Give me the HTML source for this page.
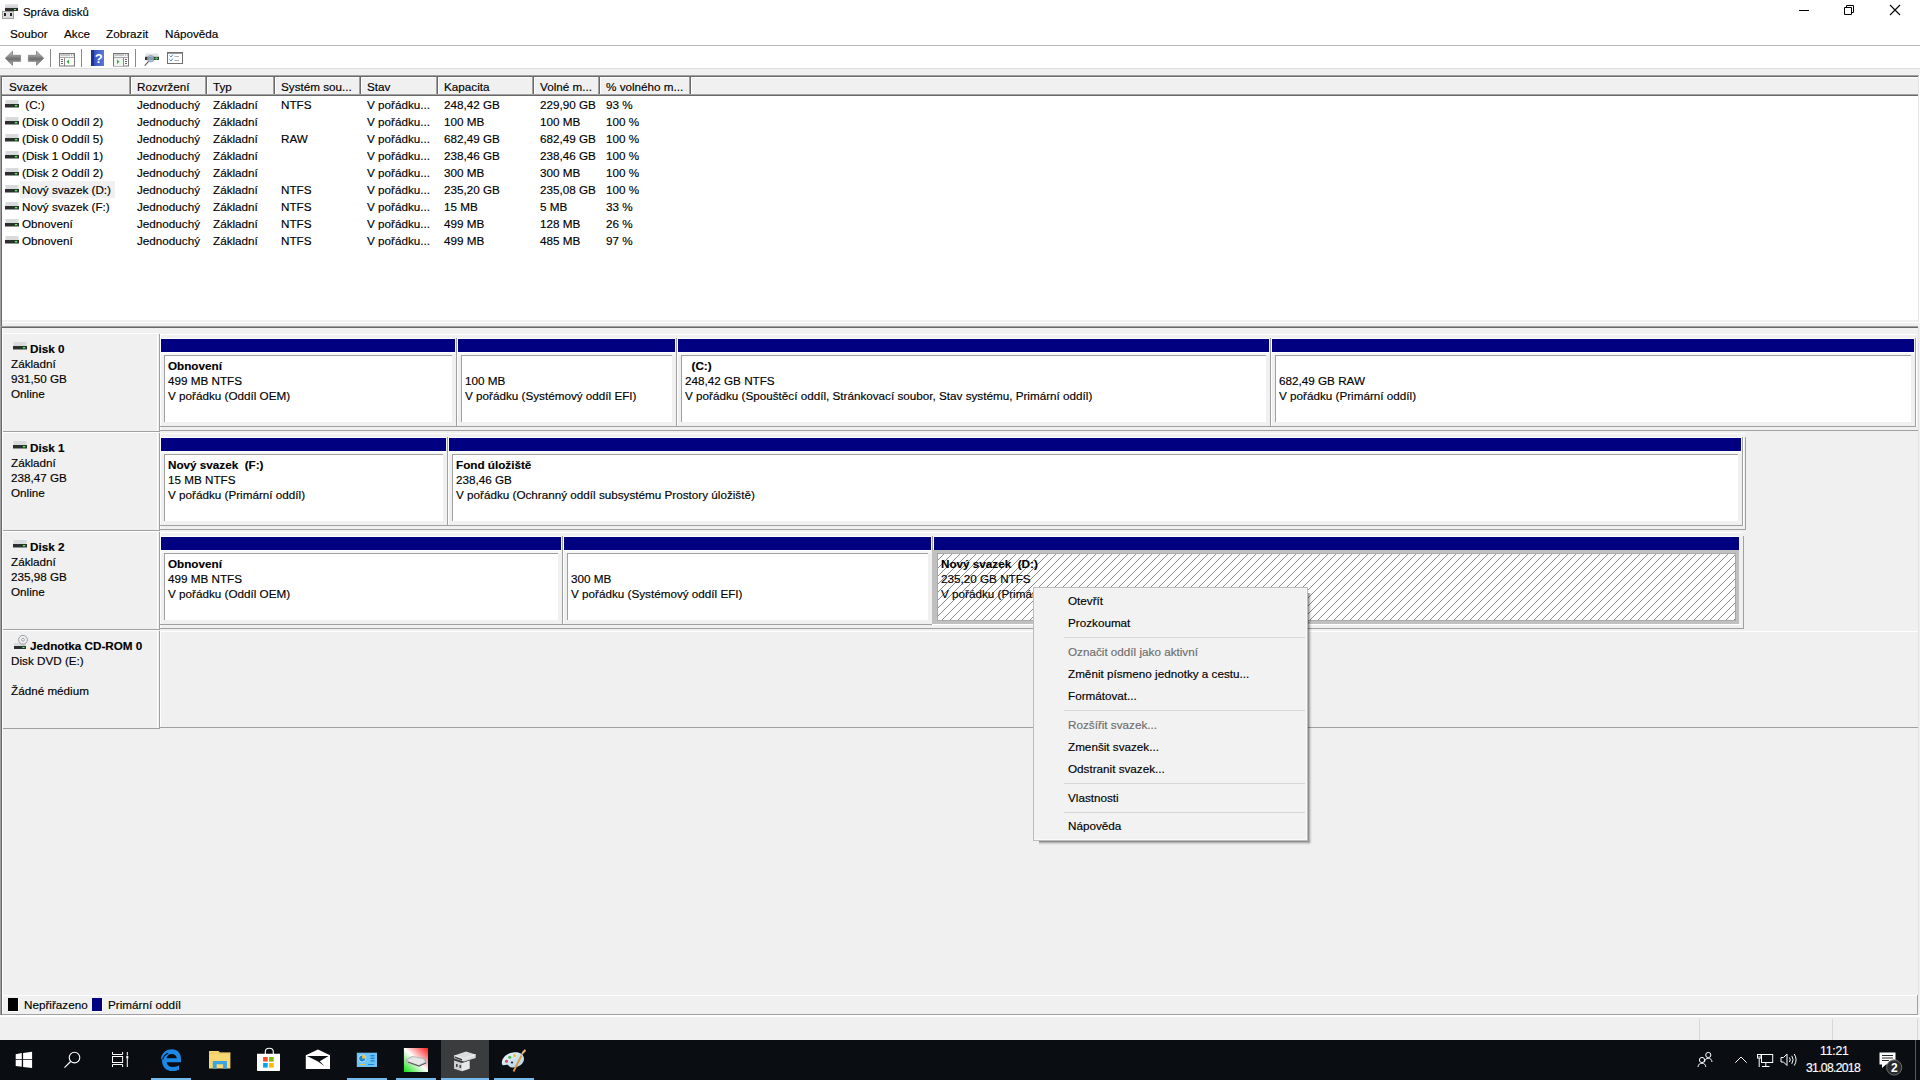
<!DOCTYPE html>
<html><head><meta charset="utf-8"><title>Správa disků</title>
<style>
html,body{margin:0;padding:0}
body{width:1920px;height:1080px;overflow:hidden;position:relative;background:#f0f0f0;font-family:"Liberation Sans",sans-serif;font-size:11.7px;color:#000}
body>div,body>svg{position:absolute}
.t{position:absolute;line-height:15px;white-space:pre;-webkit-text-stroke:0.15px currentColor}
.hatch{position:absolute;background-color:#fff;background-image:repeating-linear-gradient(-45deg,transparent 0,transparent 4.65px,#8c8c8c 4.65px,#8c8c8c 5.65px)}
</style></head><body>
<div style="left:0px;top:0px;width:1920px;height:45px;background:#fff"></div>
<svg style="left:1px;top:3px" width="18" height="17" viewBox="0 0 18 17">
<defs><linearGradient id="dg" x1="0" y1="0" x2="0" y2="1"><stop offset="0" stop-color="#e6e8ea"/><stop offset="1" stop-color="#c4c7ca"/></linearGradient></defs>
<rect x="4" y="1" width="13" height="5" fill="url(#dg)"/>
<rect x="4" y="5" width="13" height="3" fill="#2b2f2c"/>
<rect x="13" y="6" width="2" height="1" fill="#7fe38a"/>
<rect x="1.5" y="8.5" width="11" height="7" fill="#dcdcde" stroke="#a0a0a0" stroke-width="1"/>
<rect x="3" y="10" width="2" height="3" fill="#222"/>
<rect x="9" y="10" width="2" height="3" fill="#222"/>
</svg>
<div class="t" style="left:23px;top:5px;font-size:11.4px">Správa disků</div>
<div style="left:1799px;top:10px;width:10px;height:1px;background:#000"></div>
<svg style="left:1843px;top:4px" width="12" height="12" viewBox="0 0 12 12">
<path d="M1.5 3.5h7v7h-7z M3.5 3.5v-2h7v7h-2" fill="none" stroke="#000" stroke-width="1"/></svg>
<svg style="left:1889px;top:4px" width="12" height="12" viewBox="0 0 12 12">
<path d="M1 1L11 11M11 1L1 11" stroke="#000" stroke-width="1.1"/></svg>
<div class="t" style="left:10px;top:26px;">Soubor</div>
<div class="t" style="left:64px;top:26px;">Akce</div>
<div class="t" style="left:106px;top:26px;">Zobrazit</div>
<div class="t" style="left:165px;top:26px;">Nápověda</div>
<div style="left:0px;top:45px;width:1920px;height:1px;background:#b6b6b6"></div>
<div style="left:0px;top:46px;width:1920px;height:22px;background:#fff"></div>
<div style="left:0px;top:68px;width:1920px;height:1px;background:#dedede"></div>
<div style="left:0px;top:69px;width:1920px;height:6px;background:#f0f0f0"></div>
<svg style="left:4px;top:50px" width="18" height="17" viewBox="0 0 18 17">
<defs><linearGradient id="ag" x1="0" y1="0" x2="0" y2="1"><stop offset="0" stop-color="#d0d0d0"/><stop offset="0.55" stop-color="#6e6e6e"/><stop offset="1" stop-color="#b0b0b0"/></linearGradient></defs>
<path d="M1.3 8.2L8.5 1.2V5.3H16.6V11.3H8.5V15.3Z" fill="url(#ag)" stroke="#8a8a8a" stroke-width="1" stroke-linejoin="round"/></svg>
<svg style="left:27px;top:50px" width="18" height="17" viewBox="0 0 18 17">
<path d="M16.7 8.2L9.5 1.2V5.3H1.4V11.3H9.5V15.3Z" fill="url(#ag)" stroke="#8a8a8a" stroke-width="1" stroke-linejoin="round"/></svg>
<div style="left:50px;top:49px;width:1px;height:18px;background:#8a8a8a"></div>
<div style="left:81px;top:49px;width:1px;height:18px;background:#8a8a8a"></div>
<div style="left:135px;top:49px;width:1px;height:18px;background:#8a8a8a"></div>
<svg style="left:59px;top:53px" width="16" height="14" viewBox="0 0 16 14">
<rect x="0.5" y="0.5" width="15" height="12.5" fill="#fff" stroke="#777"/>
<rect x="1" y="1" width="14" height="3" fill="#eef0f2"/>
<line x1="1.5" y1="2" x2="11" y2="2" stroke="#9a9a9a"/>
<rect x="12" y="1.5" width="1" height="1" fill="#888"/><rect x="14" y="1.5" width="1" height="1" fill="#888"/>
<line x1="1" y1="4.5" x2="15" y2="4.5" stroke="#aaa"/>
<line x1="5.5" y1="5" x2="5.5" y2="13" stroke="#888"/>
<rect x="2" y="6" width="2" height="1" fill="#666"/><rect x="2" y="8" width="2" height="1" fill="#666"/><rect x="2" y="10" width="2" height="1" fill="#666"/>
<path d="M10 6.5L7.5 8.8L10 11Z" fill="#3cb43c"/>
</svg>
<svg style="left:91px;top:50px" width="13" height="16" viewBox="0 0 13 16">
<defs><linearGradient id="hg" x1="0" y1="0" x2="1" y2="0"><stop offset="0" stop-color="#2a44b0"/><stop offset="0.2" stop-color="#3550c0"/><stop offset="1" stop-color="#5a7ad8"/></linearGradient></defs>
<rect x="0" y="0" width="13" height="16" fill="url(#hg)"/>
<rect x="0" y="0" width="3" height="16" fill="#1e3493"/>
<text x="7.8" y="13" font-family="Liberation Sans" font-size="13" font-weight="bold" fill="#fff" text-anchor="middle">?</text>
</svg>
<svg style="left:113px;top:53px" width="16" height="14" viewBox="0 0 16 14">
<rect x="0.5" y="0.5" width="15" height="12.5" fill="#fff" stroke="#777"/>
<rect x="1" y="1" width="14" height="3" fill="#eef0f2"/>
<line x1="1.5" y1="2" x2="11" y2="2" stroke="#9a9a9a"/>
<rect x="12" y="1.5" width="1" height="1" fill="#888"/><rect x="14" y="1.5" width="1" height="1" fill="#888"/>
<line x1="1" y1="4.5" x2="15" y2="4.5" stroke="#aaa"/>
<rect x="1" y="5" width="9" height="8" fill="#f0f4f0"/>
<line x1="10.5" y1="5" x2="10.5" y2="13" stroke="#888"/>
<rect x="12" y="6" width="2" height="1" fill="#666"/><rect x="12" y="8" width="2" height="1" fill="#666"/><rect x="12" y="10" width="2" height="1" fill="#666"/>
<path d="M4 6.5L6.5 8.8L4 11Z" fill="#3cb43c"/>
</svg>
<svg style="left:144px;top:53px" width="16" height="14" viewBox="0 0 16 14">
<path d="M2 0.5H14L15 3.8H1Z" fill="#dfe1e2"/>
<rect x="1" y="3.8" width="14" height="3.2" fill="#2f3531"/>
<rect x="11" y="4.6" width="3" height="1.6" fill="#3fbf4a"/>
<rect x="12" y="4" width="1" height="2.8" fill="#3fbf4a"/>
<circle cx="6.7" cy="5.7" r="3.3" fill="#9db8cc" fill-opacity="0.8" stroke="#7d98ad" stroke-width="0.7"/>
<line x1="4.6" y1="8.3" x2="0.7" y2="12.6" stroke="#5a5a5a" stroke-width="1.1"/>
</svg>
<svg style="left:167px;top:52px" width="16" height="12" viewBox="0 0 16 12">
<rect x="0.5" y="0.5" width="15" height="11" fill="#fff" stroke="#707070"/>
<line x1="1" y1="1.5" x2="15" y2="1.5" stroke="#9a9a9a"/>
<path d="M2.5 3.5L4 5L6 2.5M2.5 7.5L4 9L6 6.5" fill="none" stroke="#4a90e0" stroke-width="1"/>
<line x1="7.5" y1="4.5" x2="12" y2="4.5" stroke="#b0b0b0"/><line x1="7.5" y1="8.5" x2="12" y2="8.5" stroke="#b0b0b0"/>
</svg>
<div style="left:0px;top:75px;width:1920px;height:248px;background:#fff"></div>
<div style="left:0px;top:75px;width:1920px;height:1px;background:#a0a0a0"></div>
<div style="left:0px;top:76px;width:1920px;height:1px;background:#696969"></div>
<div style="left:0px;top:75px;width:1px;height:251px;background:#a0a0a0"></div>
<div style="left:1px;top:76px;width:1px;height:250px;background:#696969"></div>
<div style="left:1918px;top:76px;width:1px;height:246px;background:#e3e3e3"></div>
<div style="left:1919px;top:75px;width:1px;height:248px;background:#fff"></div>
<div style="left:2px;top:320px;width:1916px;height:1px;background:#f0f0f0"></div>
<div style="left:2px;top:321px;width:1916px;height:1px;background:#f0f0f0"></div>
<div style="left:2px;top:322px;width:1918px;height:1px;background:#fff"></div>
<div style="left:2px;top:77px;width:1916px;height:17px;background:#f0f0f0"></div>
<div style="left:2px;top:77px;width:1916px;height:1px;background:#fff"></div>
<div style="left:2px;top:94px;width:1916px;height:1px;background:#a0a0a0"></div>
<div style="left:2px;top:95px;width:1916px;height:1px;background:#696969"></div>
<div style="left:2px;top:77px;width:1px;height:17px;background:#fff"></div>
<div style="left:129px;top:77px;width:1px;height:17px;background:#a0a0a0"></div>
<div style="left:130px;top:77px;width:1px;height:17px;background:#696969"></div>
<div style="left:131px;top:77px;width:1px;height:17px;background:#fff"></div>
<div style="left:205px;top:77px;width:1px;height:17px;background:#a0a0a0"></div>
<div style="left:206px;top:77px;width:1px;height:17px;background:#696969"></div>
<div style="left:207px;top:77px;width:1px;height:17px;background:#fff"></div>
<div style="left:273px;top:77px;width:1px;height:17px;background:#a0a0a0"></div>
<div style="left:274px;top:77px;width:1px;height:17px;background:#696969"></div>
<div style="left:275px;top:77px;width:1px;height:17px;background:#fff"></div>
<div style="left:359px;top:77px;width:1px;height:17px;background:#a0a0a0"></div>
<div style="left:360px;top:77px;width:1px;height:17px;background:#696969"></div>
<div style="left:361px;top:77px;width:1px;height:17px;background:#fff"></div>
<div style="left:436px;top:77px;width:1px;height:17px;background:#a0a0a0"></div>
<div style="left:437px;top:77px;width:1px;height:17px;background:#696969"></div>
<div style="left:438px;top:77px;width:1px;height:17px;background:#fff"></div>
<div style="left:532px;top:77px;width:1px;height:17px;background:#a0a0a0"></div>
<div style="left:533px;top:77px;width:1px;height:17px;background:#696969"></div>
<div style="left:534px;top:77px;width:1px;height:17px;background:#fff"></div>
<div style="left:598px;top:77px;width:1px;height:17px;background:#a0a0a0"></div>
<div style="left:599px;top:77px;width:1px;height:17px;background:#696969"></div>
<div style="left:600px;top:77px;width:1px;height:17px;background:#fff"></div>
<div style="left:689px;top:77px;width:1px;height:17px;background:#a0a0a0"></div>
<div style="left:690px;top:77px;width:1px;height:17px;background:#696969"></div>
<div style="left:691px;top:77px;width:1px;height:17px;background:#fff"></div>
<div class="t" style="left:9px;top:79px;">Svazek</div>
<div class="t" style="left:137px;top:79px;">Rozvržení</div>
<div class="t" style="left:213px;top:79px;">Typ</div>
<div class="t" style="left:281px;top:79px;">Systém sou...</div>
<div class="t" style="left:367px;top:79px;">Stav</div>
<div class="t" style="left:444px;top:79px;">Kapacita</div>
<div class="t" style="left:540px;top:79px;">Volné m...</div>
<div class="t" style="left:606px;top:79px;">% volného m...</div>
<div style="left:20px;top:181px;width:95px;height:17px;background:#f0f0f0"></div>
<svg style="left:5px;top:100px" width="14" height="8" viewBox="0 0 14 8">
<rect x="0.5" y="0" width="13" height="4" fill="#d8dadc"/>
<rect x="0" y="4" width="14" height="3.4" fill="#2d2f2e"/>
<rect x="0" y="7.4" width="14" height="0.6" fill="#8a8a8a"/>
<rect x="9" y="4.5" width="4" height="2.4" fill="#14501c"/>
<rect x="10" y="5.1" width="2.2" height="1.2" fill="#8ae88e"/>
</svg>
<div class="t" style="left:22px;top:97px;"> (C:)</div>
<div class="t" style="left:137px;top:97px;">Jednoduchý</div>
<div class="t" style="left:213px;top:97px;">Základní</div>
<div class="t" style="left:281px;top:97px;">NTFS</div>
<div class="t" style="left:367px;top:97px;">V pořádku...</div>
<div class="t" style="left:444px;top:97px;">248,42 GB</div>
<div class="t" style="left:540px;top:97px;">229,90 GB</div>
<div class="t" style="left:606px;top:97px;">93 %</div>
<svg style="left:5px;top:117px" width="14" height="8" viewBox="0 0 14 8">
<rect x="0.5" y="0" width="13" height="4" fill="#d8dadc"/>
<rect x="0" y="4" width="14" height="3.4" fill="#2d2f2e"/>
<rect x="0" y="7.4" width="14" height="0.6" fill="#8a8a8a"/>
<rect x="9" y="4.5" width="4" height="2.4" fill="#14501c"/>
<rect x="10" y="5.1" width="2.2" height="1.2" fill="#8ae88e"/>
</svg>
<div class="t" style="left:22px;top:114px;">(Disk 0 Oddíl 2)</div>
<div class="t" style="left:137px;top:114px;">Jednoduchý</div>
<div class="t" style="left:213px;top:114px;">Základní</div>
<div class="t" style="left:367px;top:114px;">V pořádku...</div>
<div class="t" style="left:444px;top:114px;">100 MB</div>
<div class="t" style="left:540px;top:114px;">100 MB</div>
<div class="t" style="left:606px;top:114px;">100 %</div>
<svg style="left:5px;top:134px" width="14" height="8" viewBox="0 0 14 8">
<rect x="0.5" y="0" width="13" height="4" fill="#d8dadc"/>
<rect x="0" y="4" width="14" height="3.4" fill="#2d2f2e"/>
<rect x="0" y="7.4" width="14" height="0.6" fill="#8a8a8a"/>
<rect x="9" y="4.5" width="4" height="2.4" fill="#14501c"/>
<rect x="10" y="5.1" width="2.2" height="1.2" fill="#8ae88e"/>
</svg>
<div class="t" style="left:22px;top:131px;">(Disk 0 Oddíl 5)</div>
<div class="t" style="left:137px;top:131px;">Jednoduchý</div>
<div class="t" style="left:213px;top:131px;">Základní</div>
<div class="t" style="left:281px;top:131px;">RAW</div>
<div class="t" style="left:367px;top:131px;">V pořádku...</div>
<div class="t" style="left:444px;top:131px;">682,49 GB</div>
<div class="t" style="left:540px;top:131px;">682,49 GB</div>
<div class="t" style="left:606px;top:131px;">100 %</div>
<svg style="left:5px;top:151px" width="14" height="8" viewBox="0 0 14 8">
<rect x="0.5" y="0" width="13" height="4" fill="#d8dadc"/>
<rect x="0" y="4" width="14" height="3.4" fill="#2d2f2e"/>
<rect x="0" y="7.4" width="14" height="0.6" fill="#8a8a8a"/>
<rect x="9" y="4.5" width="4" height="2.4" fill="#14501c"/>
<rect x="10" y="5.1" width="2.2" height="1.2" fill="#8ae88e"/>
</svg>
<div class="t" style="left:22px;top:148px;">(Disk 1 Oddíl 1)</div>
<div class="t" style="left:137px;top:148px;">Jednoduchý</div>
<div class="t" style="left:213px;top:148px;">Základní</div>
<div class="t" style="left:367px;top:148px;">V pořádku...</div>
<div class="t" style="left:444px;top:148px;">238,46 GB</div>
<div class="t" style="left:540px;top:148px;">238,46 GB</div>
<div class="t" style="left:606px;top:148px;">100 %</div>
<svg style="left:5px;top:168px" width="14" height="8" viewBox="0 0 14 8">
<rect x="0.5" y="0" width="13" height="4" fill="#d8dadc"/>
<rect x="0" y="4" width="14" height="3.4" fill="#2d2f2e"/>
<rect x="0" y="7.4" width="14" height="0.6" fill="#8a8a8a"/>
<rect x="9" y="4.5" width="4" height="2.4" fill="#14501c"/>
<rect x="10" y="5.1" width="2.2" height="1.2" fill="#8ae88e"/>
</svg>
<div class="t" style="left:22px;top:165px;">(Disk 2 Oddíl 2)</div>
<div class="t" style="left:137px;top:165px;">Jednoduchý</div>
<div class="t" style="left:213px;top:165px;">Základní</div>
<div class="t" style="left:367px;top:165px;">V pořádku...</div>
<div class="t" style="left:444px;top:165px;">300 MB</div>
<div class="t" style="left:540px;top:165px;">300 MB</div>
<div class="t" style="left:606px;top:165px;">100 %</div>
<svg style="left:5px;top:185px" width="14" height="8" viewBox="0 0 14 8">
<rect x="0.5" y="0" width="13" height="4" fill="#d8dadc"/>
<rect x="0" y="4" width="14" height="3.4" fill="#2d2f2e"/>
<rect x="0" y="7.4" width="14" height="0.6" fill="#8a8a8a"/>
<rect x="9" y="4.5" width="4" height="2.4" fill="#14501c"/>
<rect x="10" y="5.1" width="2.2" height="1.2" fill="#8ae88e"/>
</svg>
<div class="t" style="left:22px;top:182px;">Nový svazek (D:)</div>
<div class="t" style="left:137px;top:182px;">Jednoduchý</div>
<div class="t" style="left:213px;top:182px;">Základní</div>
<div class="t" style="left:281px;top:182px;">NTFS</div>
<div class="t" style="left:367px;top:182px;">V pořádku...</div>
<div class="t" style="left:444px;top:182px;">235,20 GB</div>
<div class="t" style="left:540px;top:182px;">235,08 GB</div>
<div class="t" style="left:606px;top:182px;">100 %</div>
<svg style="left:5px;top:202px" width="14" height="8" viewBox="0 0 14 8">
<rect x="0.5" y="0" width="13" height="4" fill="#d8dadc"/>
<rect x="0" y="4" width="14" height="3.4" fill="#2d2f2e"/>
<rect x="0" y="7.4" width="14" height="0.6" fill="#8a8a8a"/>
<rect x="9" y="4.5" width="4" height="2.4" fill="#14501c"/>
<rect x="10" y="5.1" width="2.2" height="1.2" fill="#8ae88e"/>
</svg>
<div class="t" style="left:22px;top:199px;">Nový svazek (F:)</div>
<div class="t" style="left:137px;top:199px;">Jednoduchý</div>
<div class="t" style="left:213px;top:199px;">Základní</div>
<div class="t" style="left:281px;top:199px;">NTFS</div>
<div class="t" style="left:367px;top:199px;">V pořádku...</div>
<div class="t" style="left:444px;top:199px;">15 MB</div>
<div class="t" style="left:540px;top:199px;">5 MB</div>
<div class="t" style="left:606px;top:199px;">33 %</div>
<svg style="left:5px;top:219px" width="14" height="8" viewBox="0 0 14 8">
<rect x="0.5" y="0" width="13" height="4" fill="#d8dadc"/>
<rect x="0" y="4" width="14" height="3.4" fill="#2d2f2e"/>
<rect x="0" y="7.4" width="14" height="0.6" fill="#8a8a8a"/>
<rect x="9" y="4.5" width="4" height="2.4" fill="#14501c"/>
<rect x="10" y="5.1" width="2.2" height="1.2" fill="#8ae88e"/>
</svg>
<div class="t" style="left:22px;top:216px;">Obnovení</div>
<div class="t" style="left:137px;top:216px;">Jednoduchý</div>
<div class="t" style="left:213px;top:216px;">Základní</div>
<div class="t" style="left:281px;top:216px;">NTFS</div>
<div class="t" style="left:367px;top:216px;">V pořádku...</div>
<div class="t" style="left:444px;top:216px;">499 MB</div>
<div class="t" style="left:540px;top:216px;">128 MB</div>
<div class="t" style="left:606px;top:216px;">26 %</div>
<svg style="left:5px;top:236px" width="14" height="8" viewBox="0 0 14 8">
<rect x="0.5" y="0" width="13" height="4" fill="#d8dadc"/>
<rect x="0" y="4" width="14" height="3.4" fill="#2d2f2e"/>
<rect x="0" y="7.4" width="14" height="0.6" fill="#8a8a8a"/>
<rect x="9" y="4.5" width="4" height="2.4" fill="#14501c"/>
<rect x="10" y="5.1" width="2.2" height="1.2" fill="#8ae88e"/>
</svg>
<div class="t" style="left:22px;top:233px;">Obnovení</div>
<div class="t" style="left:137px;top:233px;">Jednoduchý</div>
<div class="t" style="left:213px;top:233px;">Základní</div>
<div class="t" style="left:281px;top:233px;">NTFS</div>
<div class="t" style="left:367px;top:233px;">V pořádku...</div>
<div class="t" style="left:444px;top:233px;">499 MB</div>
<div class="t" style="left:540px;top:233px;">485 MB</div>
<div class="t" style="left:606px;top:233px;">97 %</div>
<div style="left:2px;top:323px;width:1918px;height:3px;background:#f0f0f0"></div>
<div style="left:0px;top:323px;width:1px;height:3px;background:#a0a0a0"></div>
<div style="left:1px;top:323px;width:1px;height:3px;background:#696969"></div>
<div style="left:0px;top:326px;width:1920px;height:691px;background:#f0f0f0"></div>
<div style="left:0px;top:326px;width:1918px;height:1px;background:#a0a0a0"></div>
<div style="left:1px;top:327px;width:1917px;height:1px;background:#696969"></div>
<div style="left:0px;top:326px;width:1px;height:690px;background:#a0a0a0"></div>
<div style="left:1px;top:327px;width:1px;height:688px;background:#696969"></div>
<div style="left:2px;top:333px;width:156px;height:1px;background:#fff"></div>
<div style="left:2px;top:431px;width:157px;height:1px;background:#a0a0a0"></div>
<div style="left:157px;top:333px;width:1px;height:98px;background:#fff"></div>
<div style="left:159px;top:334px;width:1px;height:98px;background:#a0a0a0"></div>
<div style="left:160px;top:334px;width:1px;height:97px;background:#fff"></div>
<svg style="left:13px;top:342px" width="14" height="8" viewBox="0 0 14 8">
<rect x="0.5" y="0" width="13" height="4" fill="#d8dadc"/>
<rect x="0" y="4" width="14" height="3.4" fill="#2d2f2e"/>
<rect x="0" y="7.4" width="14" height="0.6" fill="#8a8a8a"/>
<rect x="9" y="4.5" width="4" height="2.4" fill="#14501c"/>
<rect x="10" y="5.1" width="2.2" height="1.2" fill="#8ae88e"/>
</svg>
<div class="t" style="left:30px;top:341px;font-weight:bold">Disk 0</div>
<div class="t" style="left:11px;top:356px;">Základní</div>
<div class="t" style="left:11px;top:371px;">931,50 GB</div>
<div class="t" style="left:11px;top:386px;">Online</div>
<div style="left:159px;top:426px;width:298px;height:1px;background:#a0a0a0"></div>
<div style="left:456px;top:426px;width:221px;height:1px;background:#a0a0a0"></div>
<div style="left:676px;top:426px;width:595px;height:1px;background:#a0a0a0"></div>
<div style="left:1270px;top:426px;width:646px;height:1px;background:#a0a0a0"></div>
<div style="left:160px;top:430px;width:1758px;height:1px;background:#a0a0a0"></div>
<div style="left:161px;top:334px;width:1756px;height:1px;background:#fff"></div>
<div style="left:161px;top:339px;width:294px;height:13px;background:#000080"></div>
<div style="left:161px;top:338px;width:294px;height:1px;background:#fff"></div>
<div style="left:161px;top:352px;width:294px;height:1px;background:#fff"></div>
<div style="left:164px;top:355px;width:288px;height:67px;background:#fff"></div>
<div style="left:164px;top:355px;width:288px;height:1px;background:#a0a0a0"></div>
<div style="left:164px;top:355px;width:1px;height:67px;background:#a0a0a0"></div>
<div style="left:161px;top:353px;width:294px;height:2px;background:#f7f7f7"></div>
<div style="left:456px;top:338px;width:1px;height:88px;background:#a0a0a0"></div>
<div style="left:457px;top:338px;width:1px;height:88px;background:#fff"></div>
<div class="t" style="left:168px;top:358px;font-weight:bold">Obnovení</div>
<div class="t" style="left:168px;top:373px;">499 MB NTFS</div>
<div class="t" style="left:168px;top:388px;">V pořádku (Oddíl OEM)</div>
<div style="left:458px;top:339px;width:217px;height:13px;background:#000080"></div>
<div style="left:458px;top:338px;width:217px;height:1px;background:#fff"></div>
<div style="left:458px;top:352px;width:217px;height:1px;background:#fff"></div>
<div style="left:461px;top:355px;width:211px;height:67px;background:#fff"></div>
<div style="left:461px;top:355px;width:211px;height:1px;background:#a0a0a0"></div>
<div style="left:461px;top:355px;width:1px;height:67px;background:#a0a0a0"></div>
<div style="left:458px;top:353px;width:217px;height:2px;background:#f7f7f7"></div>
<div style="left:676px;top:338px;width:1px;height:88px;background:#a0a0a0"></div>
<div style="left:677px;top:338px;width:1px;height:88px;background:#fff"></div>
<div class="t" style="left:465px;top:373px;">100 MB</div>
<div class="t" style="left:465px;top:388px;">V pořádku (Systémový oddíl EFI)</div>
<div style="left:678px;top:339px;width:591px;height:13px;background:#000080"></div>
<div style="left:678px;top:338px;width:591px;height:1px;background:#fff"></div>
<div style="left:678px;top:352px;width:591px;height:1px;background:#fff"></div>
<div style="left:681px;top:355px;width:585px;height:67px;background:#fff"></div>
<div style="left:681px;top:355px;width:585px;height:1px;background:#a0a0a0"></div>
<div style="left:681px;top:355px;width:1px;height:67px;background:#a0a0a0"></div>
<div style="left:678px;top:353px;width:591px;height:2px;background:#f7f7f7"></div>
<div style="left:1270px;top:338px;width:1px;height:88px;background:#a0a0a0"></div>
<div style="left:1271px;top:338px;width:1px;height:88px;background:#fff"></div>
<div class="t" style="left:685px;top:358px;font-weight:bold">  (C:)</div>
<div class="t" style="left:685px;top:373px;">248,42 GB NTFS</div>
<div class="t" style="left:685px;top:388px;">V pořádku (Spouštěcí oddíl, Stránkovací soubor, Stav systému, Primární oddíl)</div>
<div style="left:1272px;top:339px;width:642px;height:13px;background:#000080"></div>
<div style="left:1272px;top:338px;width:642px;height:1px;background:#fff"></div>
<div style="left:1272px;top:352px;width:642px;height:1px;background:#fff"></div>
<div style="left:1275px;top:355px;width:636px;height:67px;background:#fff"></div>
<div style="left:1275px;top:355px;width:636px;height:1px;background:#a0a0a0"></div>
<div style="left:1275px;top:355px;width:1px;height:67px;background:#a0a0a0"></div>
<div style="left:1272px;top:353px;width:642px;height:2px;background:#f7f7f7"></div>
<div style="left:1915px;top:338px;width:1px;height:88px;background:#a0a0a0"></div>
<div style="left:1916px;top:338px;width:1px;height:88px;background:#fff"></div>
<div class="t" style="left:1279px;top:373px;">682,49 GB RAW</div>
<div class="t" style="left:1279px;top:388px;">V pořádku (Primární oddíl)</div>
<div style="left:2px;top:432px;width:156px;height:1px;background:#fff"></div>
<div style="left:2px;top:530px;width:157px;height:1px;background:#a0a0a0"></div>
<div style="left:157px;top:432px;width:1px;height:98px;background:#fff"></div>
<div style="left:159px;top:433px;width:1px;height:98px;background:#a0a0a0"></div>
<div style="left:160px;top:433px;width:1px;height:97px;background:#fff"></div>
<svg style="left:13px;top:441px" width="14" height="8" viewBox="0 0 14 8">
<rect x="0.5" y="0" width="13" height="4" fill="#d8dadc"/>
<rect x="0" y="4" width="14" height="3.4" fill="#2d2f2e"/>
<rect x="0" y="7.4" width="14" height="0.6" fill="#8a8a8a"/>
<rect x="9" y="4.5" width="4" height="2.4" fill="#14501c"/>
<rect x="10" y="5.1" width="2.2" height="1.2" fill="#8ae88e"/>
</svg>
<div class="t" style="left:30px;top:440px;font-weight:bold">Disk 1</div>
<div class="t" style="left:11px;top:455px;">Základní</div>
<div class="t" style="left:11px;top:470px;">238,47 GB</div>
<div class="t" style="left:11px;top:485px;">Online</div>
<div style="left:159px;top:525px;width:289px;height:1px;background:#a0a0a0"></div>
<div style="left:447px;top:525px;width:1296px;height:1px;background:#a0a0a0"></div>
<div style="left:160px;top:529px;width:1586px;height:1px;background:#a0a0a0"></div>
<div style="left:161px;top:433px;width:1584px;height:1px;background:#fff"></div>
<div style="left:1745px;top:437px;width:1px;height:93px;background:#a0a0a0"></div>
<div style="left:161px;top:438px;width:285px;height:13px;background:#000080"></div>
<div style="left:161px;top:437px;width:285px;height:1px;background:#fff"></div>
<div style="left:161px;top:451px;width:285px;height:1px;background:#fff"></div>
<div style="left:164px;top:454px;width:279px;height:67px;background:#fff"></div>
<div style="left:164px;top:454px;width:279px;height:1px;background:#a0a0a0"></div>
<div style="left:164px;top:454px;width:1px;height:67px;background:#a0a0a0"></div>
<div style="left:161px;top:452px;width:285px;height:2px;background:#f7f7f7"></div>
<div style="left:447px;top:437px;width:1px;height:88px;background:#a0a0a0"></div>
<div style="left:448px;top:437px;width:1px;height:88px;background:#fff"></div>
<div class="t" style="left:168px;top:457px;font-weight:bold">Nový svazek  (F:)</div>
<div class="t" style="left:168px;top:472px;">15 MB NTFS</div>
<div class="t" style="left:168px;top:487px;">V pořádku (Primární oddíl)</div>
<div style="left:449px;top:438px;width:1292px;height:13px;background:#000080"></div>
<div style="left:449px;top:437px;width:1292px;height:1px;background:#fff"></div>
<div style="left:449px;top:451px;width:1292px;height:1px;background:#fff"></div>
<div style="left:452px;top:454px;width:1286px;height:67px;background:#fff"></div>
<div style="left:452px;top:454px;width:1286px;height:1px;background:#a0a0a0"></div>
<div style="left:452px;top:454px;width:1px;height:67px;background:#a0a0a0"></div>
<div style="left:449px;top:452px;width:1292px;height:2px;background:#f7f7f7"></div>
<div style="left:1742px;top:437px;width:1px;height:88px;background:#a0a0a0"></div>
<div style="left:1743px;top:437px;width:1px;height:88px;background:#fff"></div>
<div class="t" style="left:456px;top:457px;font-weight:bold">Fond úložiště</div>
<div class="t" style="left:456px;top:472px;">238,46 GB</div>
<div class="t" style="left:456px;top:487px;">V pořádku (Ochranný oddíl subsystému Prostory úložiště)</div>
<div style="left:2px;top:531px;width:156px;height:1px;background:#fff"></div>
<div style="left:2px;top:629px;width:157px;height:1px;background:#a0a0a0"></div>
<div style="left:157px;top:531px;width:1px;height:98px;background:#fff"></div>
<div style="left:159px;top:532px;width:1px;height:98px;background:#a0a0a0"></div>
<div style="left:160px;top:532px;width:1px;height:97px;background:#fff"></div>
<svg style="left:13px;top:540px" width="14" height="8" viewBox="0 0 14 8">
<rect x="0.5" y="0" width="13" height="4" fill="#d8dadc"/>
<rect x="0" y="4" width="14" height="3.4" fill="#2d2f2e"/>
<rect x="0" y="7.4" width="14" height="0.6" fill="#8a8a8a"/>
<rect x="9" y="4.5" width="4" height="2.4" fill="#14501c"/>
<rect x="10" y="5.1" width="2.2" height="1.2" fill="#8ae88e"/>
</svg>
<div class="t" style="left:30px;top:539px;font-weight:bold">Disk 2</div>
<div class="t" style="left:11px;top:554px;">Základní</div>
<div class="t" style="left:11px;top:569px;">235,98 GB</div>
<div class="t" style="left:11px;top:584px;">Online</div>
<div style="left:159px;top:624px;width:404px;height:1px;background:#a0a0a0"></div>
<div style="left:562px;top:624px;width:371px;height:1px;background:#a0a0a0"></div>
<div style="left:932px;top:624px;width:809px;height:1px;background:#fff"></div>
<div style="left:160px;top:628px;width:1584px;height:1px;background:#a0a0a0"></div>
<div style="left:161px;top:532px;width:1582px;height:1px;background:#fff"></div>
<div style="left:1743px;top:536px;width:1px;height:93px;background:#a0a0a0"></div>
<div style="left:161px;top:537px;width:400px;height:13px;background:#000080"></div>
<div style="left:161px;top:536px;width:400px;height:1px;background:#fff"></div>
<div style="left:161px;top:550px;width:400px;height:1px;background:#fff"></div>
<div style="left:164px;top:553px;width:394px;height:67px;background:#fff"></div>
<div style="left:164px;top:553px;width:394px;height:1px;background:#a0a0a0"></div>
<div style="left:164px;top:553px;width:1px;height:67px;background:#a0a0a0"></div>
<div style="left:161px;top:551px;width:400px;height:2px;background:#f7f7f7"></div>
<div style="left:562px;top:536px;width:1px;height:88px;background:#a0a0a0"></div>
<div style="left:563px;top:536px;width:1px;height:88px;background:#fff"></div>
<div class="t" style="left:168px;top:556px;font-weight:bold">Obnovení</div>
<div class="t" style="left:168px;top:571px;">499 MB NTFS</div>
<div class="t" style="left:168px;top:586px;">V pořádku (Oddíl OEM)</div>
<div style="left:564px;top:537px;width:367px;height:13px;background:#000080"></div>
<div style="left:564px;top:536px;width:367px;height:1px;background:#fff"></div>
<div style="left:564px;top:550px;width:367px;height:1px;background:#fff"></div>
<div style="left:567px;top:553px;width:361px;height:67px;background:#fff"></div>
<div style="left:567px;top:553px;width:361px;height:1px;background:#a0a0a0"></div>
<div style="left:567px;top:553px;width:1px;height:67px;background:#a0a0a0"></div>
<div style="left:564px;top:551px;width:367px;height:2px;background:#f7f7f7"></div>
<div style="left:932px;top:536px;width:1px;height:88px;background:#a0a0a0"></div>
<div style="left:933px;top:536px;width:1px;height:88px;background:#fff"></div>
<div class="t" style="left:571px;top:571px;">300 MB</div>
<div class="t" style="left:571px;top:586px;">V pořádku (Systémový oddíl EFI)</div>
<div style="left:934px;top:537px;width:805px;height:13px;background:#000080"></div>
<div style="left:934px;top:536px;width:805px;height:1px;background:#fff"></div>
<div style="left:932px;top:550px;width:807px;height:74px;background:#c0c0c0"></div>
<div style="left:937px;top:553px;width:799px;height:68px;background:#a8a8a8"></div>
<svg style="left:938px;top:554px" width="797" height="66" shape-rendering="crispEdges">
<defs><pattern id="hp" patternUnits="userSpaceOnUse" x="6" y="6" width="8" height="8">
<rect width="8" height="8" fill="#fff"/>
<path d="M0 1h1v1h-1zM1 0h1v1h-1zM2 7h1v1h-1zM3 6h1v1h-1zM4 5h1v1h-1zM5 4h1v1h-1zM6 3h1v1h-1zM7 2h1v1h-1z" fill="#8a8a8a"/>
</pattern></defs><rect width="797" height="66" fill="url(#hp)"/></svg>
<div class="t" style="left:941px;top:556px;font-weight:bold">Nový svazek  (D:)</div>
<div class="t" style="left:941px;top:571px;">235,20 GB NTFS</div>
<div class="t" style="left:941px;top:586px;">V pořádku (Primární oddíl)</div>
<div style="left:2px;top:630px;width:156px;height:1px;background:#fff"></div>
<div style="left:2px;top:728px;width:157px;height:1px;background:#a0a0a0"></div>
<div style="left:157px;top:630px;width:1px;height:98px;background:#fff"></div>
<div style="left:159px;top:631px;width:1px;height:98px;background:#a0a0a0"></div>
<div style="left:160px;top:631px;width:1px;height:97px;background:#fff"></div>
<svg style="left:13px;top:635px" width="15" height="15" viewBox="0 0 15 15">
<rect x="1" y="8" width="12" height="3" fill="#d8dadc"/>
<circle cx="10" cy="4.8" r="4.4" fill="#eef0f1" stroke="#9a9ea2" stroke-width="1"/><circle cx="10" cy="4.8" r="1.4" fill="#fff" stroke="#8a8e92" stroke-width="0.8"/>
<rect x="1" y="11" width="12" height="3" fill="#2d2f2e"/>
<rect x="8.5" y="11.5" width="4" height="2" fill="#14501c"/>
<rect x="9.5" y="12" width="2" height="1" fill="#8ae88e"/></svg>
<div class="t" style="left:30px;top:638px;font-weight:bold">Jednotka CD-ROM 0</div>
<div class="t" style="left:11px;top:653px;">Disk DVD (E:)</div>
<div class="t" style="left:11px;top:683px;">Žádné médium</div>
<div style="left:160px;top:727px;width:1758px;height:1px;background:#a0a0a0"></div>
<div style="left:160px;top:631px;width:1758px;height:1px;background:#fff"></div>
<div style="left:2px;top:995px;width:1916px;height:1px;background:#fff"></div>
<div style="left:2px;top:328px;width:1px;height:686px;background:#fff"></div>
<div style="left:8px;top:998px;width:11px;height:14px;background:#fff"></div>
<div style="left:8px;top:998px;width:10px;height:13px;background:#000"></div>
<div class="t" style="left:24px;top:997px;">Nepřiřazeno</div>
<div style="left:92px;top:998px;width:11px;height:14px;background:#fff"></div>
<div style="left:92px;top:998px;width:10px;height:13px;background:#000080"></div>
<div class="t" style="left:108px;top:997px;">Primární oddíl</div>
<div style="left:2px;top:1014px;width:1916px;height:1px;background:#a0a0a0"></div>
<div style="left:1917px;top:995px;width:1px;height:20px;background:#a0a0a0"></div>
<div style="left:1918px;top:328px;width:1px;height:667px;background:#e3e3e3"></div>
<div style="left:0px;top:1015px;width:1920px;height:1px;background:#fff"></div>
<div style="left:0px;top:1016px;width:1920px;height:1px;background:#fff"></div>
<div style="left:0px;top:1017px;width:1920px;height:1px;background:#dcdcdc"></div>
<div style="left:0px;top:1017px;width:1920px;height:23px;background:#f0f0f0"></div>
<div style="left:1699px;top:1019px;width:1px;height:21px;background:#d7d7d7"></div>
<div style="left:1832px;top:1019px;width:1px;height:21px;background:#d7d7d7"></div>
<div style="left:1917px;top:1019px;width:1px;height:21px;background:#d7d7d7"></div>
<div style="left:0px;top:1040px;width:1920px;height:40px;background:#0a0d12"></div>
<div style="left:441px;top:1040px;width:48px;height:40px;background:#3b3c3e"></div>
<div style="left:151px;top:1078px;width:40px;height:2px;background:#76b9ed"></div>
<div style="left:347px;top:1078px;width:40px;height:2px;background:#76b9ed"></div>
<div style="left:396px;top:1078px;width:40px;height:2px;background:#76b9ed"></div>
<div style="left:441px;top:1078px;width:48px;height:2px;background:#76b9ed"></div>
<div style="left:494px;top:1078px;width:40px;height:2px;background:#76b9ed"></div>
<svg style="left:0px;top:1040px" width="540" height="40" viewBox="0 1040 540 40">
<path d="M15.7 1054.2L21.8 1053.1V1059.2H15.7Z M15.7 1060.1H21.8V1066.8L15.7 1065.9Z M23.1 1052.9L32.1 1051.7V1059.2H23.1Z M23.1 1060.1H32.1V1068.1L23.1 1067Z" fill="#fff"/>
<circle cx="74.5" cy="1057.6" r="5.3" fill="none" stroke="#fff" stroke-width="1.1"/>
<path d="M70.6 1061.5L64.5 1067.6" stroke="#fff" stroke-width="1.2"/>
<path d="M112.5 1052V1054.5H122.6V1052 M112.5 1067V1064.5H122.6V1067 M127.3 1052V1055.5 M127.3 1058.5V1067" fill="none" stroke="#fff" stroke-width="1"/>
<rect x="112.5" y="1056.5" width="10.1" height="6" fill="none" stroke="#fff" stroke-width="1"/>
<rect x="126.3" y="1056" width="2" height="2.6" fill="#fff"/>
<!-- edge -->
<path fill-rule="evenodd" d="M181 1062.2H166.6C167 1065.3 169.5 1066.9 173 1066.9C175.5 1066.9 177.5 1066.3 179 1065.2V1069.8C177.3 1070.7 175 1071.1 172.5 1071.1C166 1071.1 162 1066.8 162 1060.5C162 1058.8 161.4 1058.6 160.8 1058.2C162.5 1052.5 166.5 1049.3 172 1049.3C177.5 1049.3 181 1053.5 181 1059Z M166.6 1058.2C166.9 1055.6 168.9 1053.9 171.7 1053.9C174.6 1053.9 176.6 1055.6 176.8 1058.2Z" fill="#1b88e6"/>
<path d="M162.6 1059.5Q163.8 1054.8 168.2 1053.2" fill="none" stroke="#0a0d12" stroke-width="1.1"/>
<!-- folder -->
<path d="M209 1051H218.5L220 1052.6H230.4V1068.4H209Z" fill="#f7d674"/>
<path d="M209 1052.6H230.4V1054H209Z" fill="#e9c25a" opacity="0.5"/>
<path d="M212.8 1068.8V1060.9H226.9V1068.8H223.1V1064.2H216.6V1068.8Z" fill="#3aa6df"/>
<!-- store -->
<path d="M265.3 1054V1051.8C265.3 1049.6 267.3 1048.3 269.3 1048.3C271.3 1048.3 273.3 1049.6 273.3 1051.8V1054" fill="none" stroke="#fff" stroke-width="1.1"/>
<path d="M257 1053.8H280V1070C280 1070.6 279.6 1071 279 1071H258C257.4 1071 257 1070.6 257 1070Z" fill="#fff"/>
<rect x="263.1" y="1057" width="4.6" height="4.6" fill="#f25022"/><rect x="269.1" y="1057" width="4.6" height="4.6" fill="#7fba00"/>
<rect x="263.1" y="1063" width="4.6" height="4.6" fill="#00a4ef"/><rect x="269.1" y="1063" width="4.6" height="4.6" fill="#ffb900"/>
<!-- mail -->
<path d="M305.8 1055.3L318 1049.6L330 1055.3V1069H305.8Z" fill="#fff"/>
<path d="M307 1056.1H328.6L319.8 1061.2L324.6 1066.3L318 1061.6Z" fill="#0a0d12"/>
</svg>
<svg style="left:340px;top:1040px" width="200" height="40" viewBox="340 1040 200 40">
<defs>
<linearGradient id="cdg" x1="1" y1="0" x2="0" y2="1"><stop offset="0" stop-color="#ff1a1a"/><stop offset="0.5" stop-color="#ffffff"/><stop offset="1" stop-color="#10e010"/></linearGradient>
<linearGradient id="plg" x1="0" y1="0" x2="1" y2="1"><stop offset="0" stop-color="#f4f9fd"/><stop offset="1" stop-color="#a9cde8"/></linearGradient>
</defs>
<!-- control panel -->
<rect x="356.8" y="1052.7" width="20.2" height="14.3" fill="#6cc4f4"/>
<circle cx="362.2" cy="1058.5" r="3.6" fill="#1d86d6" stroke="#d8f0ff" stroke-width="0.8"/>
<path d="M362.2 1058.5V1054.9A3.6 3.6 0 0 1 365.8 1058.5Z" fill="#f5c242"/>
<rect x="370.5" y="1055" width="4" height="1.4" fill="#1d86d6"/><rect x="370.5" y="1057.6" width="4" height="1.4" fill="#1d86d6"/><rect x="370.5" y="1060.2" width="4" height="1.4" fill="#1d86d6"/>
<rect x="360" y="1064" width="5" height="1" fill="#e8c050"/><rect x="368" y="1064" width="6" height="1" fill="#1d86d6"/>
<!-- colorful disk -->
<rect x="403.9" y="1048" width="24.1" height="24" fill="url(#cdg)"/>
<path d="M405 1060L412 1056L425 1058L427 1063L419 1067L407 1063Z" fill="#b8b8b8"/>
<path d="M407 1060L413 1057L423 1059L425 1062L419 1065L409 1062Z" fill="#e6e6e6"/>
<path d="M408 1062L419 1066L426 1063" fill="none" stroke="#555" stroke-width="1"/>
<!-- disk mgmt -->
<path d="M454.3 1055.5L466 1051.5L475.7 1054.5V1058L464 1061.5L454.3 1058.5Z" fill="#dcdcdc"/>
<path d="M454.3 1055.5L464 1058.5L475.7 1054.5" fill="none" stroke="#f4f4f4" stroke-width="0.8"/>
<path d="M455 1056.5L462 1059L462 1060.5L455 1058Z" fill="#3a3a3a"/>
<path d="M454 1060.5L462 1063V1071.2L454 1068.8Z" fill="#cfcfcf"/>
<path d="M462 1063L469.7 1060.5V1068.8L462 1071.2Z" fill="#e8e8e8"/>
<rect x="456" y="1064" width="1.6" height="3" fill="#444"/><rect x="459.5" y="1065" width="1.6" height="3" fill="#444"/>
<!-- paint -->
<path d="M513 1052.5C519 1051.5 524 1054 524 1059C524 1064 519 1067 513 1067.5C510 1068 509 1066 508 1065C506.5 1064 504 1066 502.5 1065C501 1063 502 1059 505 1056C507 1054 510 1053 513 1052.5Z" fill="url(#plg)"/>
<circle cx="506.5" cy="1061.2" r="1.5" fill="#d54848"/><circle cx="509.7" cy="1057.3" r="1.5" fill="#4cb848"/><circle cx="514.5" cy="1055.6" r="1.5" fill="#f0c030"/>
<circle cx="512" cy="1062.5" r="1.1" fill="#1a1a2a"/>
<path d="M513.5 1071.5L521.5 1055.5" stroke="#e29a3a" stroke-width="1.8"/>
<path d="M521 1056L522 1052L525 1049L526 1051Z" fill="#e8b878"/>
</svg>
<svg style="left:1680px;top:1040px" width="240" height="40" viewBox="1680 1040 240 40">
<circle cx="1708.3" cy="1055" r="2.6" fill="none" stroke="#fff" stroke-width="1"/>
<path d="M1704.5 1062.2C1704.8 1059.5 1706.3 1058.3 1708.3 1058.3C1710.5 1058.3 1711.8 1059.7 1712 1062" fill="none" stroke="#fff" stroke-width="1"/>
<circle cx="1702" cy="1060" r="2.6" fill="none" stroke="#fff" stroke-width="1"/>
<path d="M1698 1067C1698.3 1064.3 1699.8 1063.2 1702 1063.2C1704.2 1063.2 1705.6 1064.5 1705.8 1067" fill="none" stroke="#fff" stroke-width="1"/>
<path d="M1735.3 1062.7L1741 1057L1746.7 1062.7" fill="none" stroke="#fff" stroke-width="1"/>
<rect x="1761.5" y="1054.5" width="11.2" height="8" fill="none" stroke="#fff" stroke-width="1"/>
<path d="M1765.8 1062.5V1066.5M1762 1066.5H1769.5" stroke="#fff" stroke-width="1"/>
<rect x="1757.5" y="1054.5" width="3.5" height="3.5" fill="#0a0d12" stroke="#fff" stroke-width="1"/>
<path d="M1758.6 1056.2L1759.3 1057L1760 1056.2" fill="none" stroke="#fff" stroke-width="0.6"/>
<path d="M1759.2 1058V1067" stroke="#fff" stroke-width="1"/>
<path d="M1781 1057.5H1783.5L1787 1054V1065.5L1783.5 1062H1781Z" fill="none" stroke="#fff" stroke-width="1"/>
<path d="M1789.5 1057.5Q1791 1059.8 1789.5 1062 M1791.8 1055.8Q1794.5 1059.8 1791.8 1063.8 M1794.2 1054Q1798 1059.8 1794.2 1065.6" fill="none" stroke="#fff" stroke-width="1"/>
<path d="M1879.5 1052.5H1895.5V1064.5H1886L1882 1068V1064.5H1879.5Z" fill="#fff"/>
<path d="M1882 1055.5H1893M1882 1058H1893M1882 1060.5H1889" stroke="#0a0d12" stroke-width="0.9"/>
<circle cx="1894.2" cy="1067.5" r="7.6" fill="#2a2b2d" stroke="#6c6c6c" stroke-width="1"/>
<text x="1894.4" y="1072" font-family="Liberation Sans" font-size="12" font-weight="bold" fill="#fff" text-anchor="middle">2</text>
<rect x="1915" y="1040" width="1" height="40" fill="#55585c"/>
</svg>
<div class="t" style="left:1820px;top:1045px;color:#fff;font-size:12.2px;line-height:12px;letter-spacing:-0.2px">11:21</div>
<div class="t" style="left:1806px;top:1062px;color:#fff;font-size:12.2px;line-height:12px;letter-spacing:-0.7px">31.08.2018</div>
<div style="left:1308px;top:593px;width:4px;height:248px;background:linear-gradient(to right,rgba(0,0,0,0.48),rgba(0,0,0,0.12) 60%,rgba(0,0,0,0))"></div>
<div style="left:1039px;top:841px;width:269px;height:4px;background:linear-gradient(to bottom,rgba(0,0,0,0.48),rgba(0,0,0,0.12) 60%,rgba(0,0,0,0))"></div>
<div style="left:1308px;top:841px;width:4px;height:4px;background:radial-gradient(circle at 0 0,rgba(0,0,0,0.45),rgba(0,0,0,0) 4px)"></div>
<div style="left:1033px;top:587px;width:275px;height:254px;background:#f2f2f2;border:1px solid #bcbcbc;box-sizing:border-box"></div>
<div style="left:1306px;top:588px;width:1px;height:252px;background:#fafafa"></div>
<div style="left:1034px;top:839px;width:272px;height:1px;background:#fafafa"></div>
<div style="left:1064px;top:637px;width:241px;height:1px;background:#d7d7d7"></div>
<div style="left:1064px;top:710px;width:241px;height:1px;background:#d7d7d7"></div>
<div style="left:1064px;top:783px;width:241px;height:1px;background:#d7d7d7"></div>
<div style="left:1064px;top:812px;width:241px;height:1px;background:#d7d7d7"></div>
<div class="t" style="left:1068px;top:593px;">Otevřít</div>
<div class="t" style="left:1068px;top:615px;">Prozkoumat</div>
<div class="t" style="left:1068px;top:644px;color:#6d6d6d">Označit oddíl jako aktivní</div>
<div class="t" style="left:1068px;top:666px;">Změnit písmeno jednotky a cestu...</div>
<div class="t" style="left:1068px;top:688px;">Formátovat...</div>
<div class="t" style="left:1068px;top:717px;color:#6d6d6d">Rozšířit svazek...</div>
<div class="t" style="left:1068px;top:739px;">Zmenšit svazek...</div>
<div class="t" style="left:1068px;top:761px;">Odstranit svazek...</div>
<div class="t" style="left:1068px;top:790px;">Vlastnosti</div>
<div class="t" style="left:1068px;top:818px;">Nápověda</div>
</body></html>
